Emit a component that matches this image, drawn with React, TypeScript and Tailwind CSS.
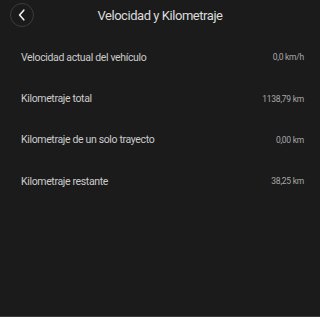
import React from "react";

const rows = [
  { label: "Velocidad actual del vehículo", value: "0,0 km/h" },
  { label: "Kilometraje total", value: "1138,79 km" },
  { label: "Kilometraje de un solo trayecto", value: "0,00 km" },
  { label: "Kilometraje restante", value: "38,25 km" },
];

export default function App() {
  return (
    <div
      className="w-[320px] h-[317px] bg-[#1b1b1b] flex flex-col border-b border-[#3a3a3a]"
      style={{ fontFamily: "Roboto, 'Noto Sans', sans-serif" }}
    >
      <div className="relative h-[31px] flex items-center justify-center">
        <button className="absolute left-[10px] top-[3px] w-[24px] h-[24px] rounded-full border border-[#3c3c3c] flex items-center justify-center">
          <svg width="10" height="12" viewBox="0 0 10 12" fill="none">
            <path d="M6.8 1.2L2.6 6L6.8 10.8" stroke="#f2f2f2" strokeWidth="1.6" strokeLinecap="round" strokeLinejoin="round" />
          </svg>
        </button>
        <div className="text-[13px] tracking-[-0.45px] text-[#dcdcdc]">Velocidad y Kilometraje</div>
      </div>
      <div className="flex flex-col pt-[6px] pl-[21px] pr-[16px]">
        {rows.map((r) => (
          <div key={r.label} className="h-[41.3px] flex items-center justify-between">
            <span className="text-[10.5px] tracking-[-0.35px] text-[#cbcbcb]">{r.label}</span>
            <span className="text-[8.5px] tracking-[-0.25px] text-[#a8a8a8]">{r.value}</span>
          </div>
        ))}
      </div>
    </div>
  );
}
